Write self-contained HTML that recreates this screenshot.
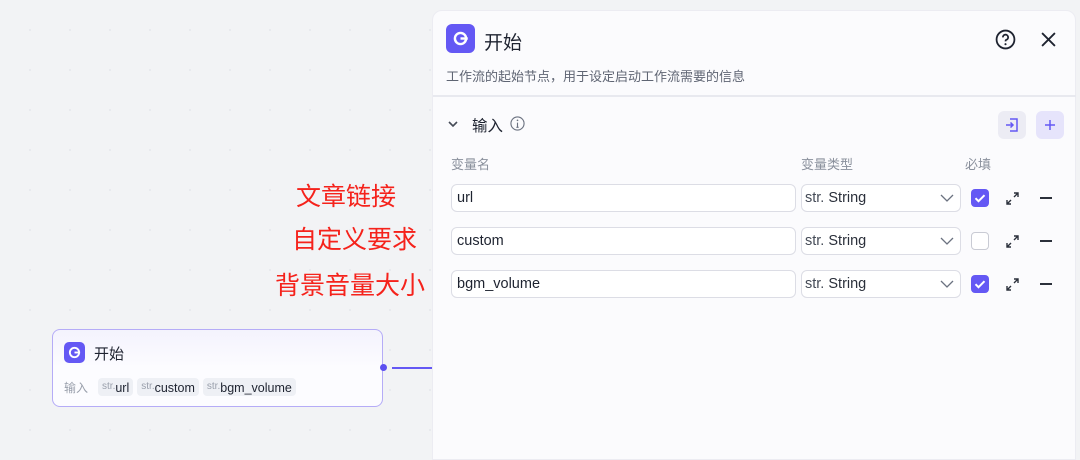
<!DOCTYPE html>
<html><head><meta charset="utf-8"><style>
*{box-sizing:border-box;margin:0;padding:0}
body{width:1080px;height:451px;overflow:hidden;position:relative;background:#f2f3f5;font-family:"Liberation Sans","Noto Sans CJK SC",sans-serif;background-image:radial-gradient(#e8e9ed 1px,transparent 1.2px);background-size:40px 40px;background-position:10px 10px}
.abs{position:absolute}
.red{position:absolute;color:#f5221b;font-size:25px;line-height:30px;white-space:nowrap}
.node{left:52px;top:329px;width:331px;height:78px;border:1.5px solid #b5acf7;border-radius:8px;background:linear-gradient(#f4f3fd,#fcfcff 50%)}
.ico{background:#6458f4;border-radius:5px;display:flex;align-items:center;justify-content:center}
.tag{display:inline-block;background:#eef0f5;border-radius:4px;height:18px;padding:0 4px;font-size:12.5px;line-height:18px;color:#1e2330;margin-right:4px}
.tag i{font-style:normal;color:#9aa0ac;font-size:10px;vertical-align:3px}
.panel{left:432px;top:10px;width:644px;height:450px;background:#fbfbfd;border-radius:10px 10px 0 0;border:1px solid #ececf2}
.in{position:absolute;left:451px;width:345px;height:28px;border:1px solid #dcdde5;border-radius:6px;background:#fff;font-size:14.5px;line-height:26px;padding-left:5px;color:#1e2330}
.sel{position:absolute;left:801px;width:160px;height:28px;border:1px solid #dcdde5;border-radius:6px;background:#fff;font-size:14.5px;line-height:26px;padding-left:3px;color:#2b303b}
.sel b{font-weight:normal;color:#454b57}
.sel svg{position:absolute;right:6px;top:9px}
.cb{position:absolute;left:971px;width:18px;height:18px;border-radius:4px}
.cb.on{background:#6458f4}
.cb.off{border:1px solid #c9cbd4;background:#fff}
.hd{position:absolute;color:#8a909c;font-size:13px;top:154px}
</style></head><body>
<div class="red" style="left:296px;top:182px">文章链接</div>
<div class="red" style="left:292px;top:225px">自定义要求</div>
<div class="red" style="left:275px;top:271px">背景音量大小</div>

<div class="abs node">
 <div class="abs ico" style="left:11px;top:12px;width:21px;height:21px"><svg width="13" height="13" viewBox="0 0 14 14"><circle cx="7" cy="7" r="5" fill="none" stroke="#fff" stroke-width="2"/><path d="M7 7h6" stroke="#fff" stroke-width="2"/></svg></div>
 <div class="abs" style="left:41px;top:13px;font-size:15px;color:#1e2330">开始</div>
 <div class="abs" style="left:11px;top:48px;font-size:12px;color:#9aa0ac;line-height:18px">输入&nbsp;&nbsp;&nbsp;<span class="tag"><i>str.</i>url</span><span class="tag"><i>str.</i>custom</span><span class="tag"><i>str.</i>bgm_volume</span></div>
</div>
<div class="abs" style="left:380px;top:364px;width:7px;height:7px;border-radius:50%;background:#5b4ff0"></div>
<div class="abs" style="left:392px;top:367px;width:40px;height:2px;background:#6458f4"></div>

<div class="abs panel"></div>
<div class="abs ico" style="left:446px;top:24px;width:29px;height:29px;border-radius:6px"><svg width="17" height="17" viewBox="0 0 14 14"><circle cx="7" cy="7" r="4.6" fill="none" stroke="#fff" stroke-width="2"/><path d="M7 7h6" stroke="#fff" stroke-width="2"/></svg></div>
<div class="abs" style="left:484px;top:28px;font-size:19px;color:#1e2330">开始</div>
<svg class="abs" style="left:995px;top:29px" width="21" height="21" viewBox="0 0 20 20"><circle cx="10" cy="10" r="8.5" fill="none" stroke="#1e2330" stroke-width="1.7"/><path d="M7.5 8a2.5 2.5 0 1 1 3.2 2.3c-.6.3-.7.7-.7 1.5" fill="none" stroke="#1e2330" stroke-width="1.7"/><circle cx="10" cy="14.5" r="1" fill="#1e2330"/></svg>
<svg class="abs" style="left:1041px;top:32px" width="15" height="15" viewBox="0 0 14 14"><path d="M1 1l12 12M13 1L1 13" stroke="#1e2330" stroke-width="1.7"/></svg>
<div class="abs" style="left:446px;top:66px;font-size:13px;color:#5f6573">工作流的起始节点，用于设定启动工作流需要的信息</div>
<div class="abs" style="left:433px;top:95px;width:643px;height:2px;background:#e8e9ef"></div>

<svg class="abs" style="left:448px;top:121px" width="10" height="7" viewBox="0 0 10 7"><path d="M1 1l4 4 4-4" fill="none" stroke="#454b57" stroke-width="1.6"/></svg>
<div class="abs" style="left:472px;top:114px;font-size:15.5px;color:#1e2330">输入</div>
<svg class="abs" style="left:510px;top:116px" width="15" height="15" viewBox="0 0 16 16"><circle cx="8" cy="8" r="7" fill="none" stroke="#6b7280" stroke-width="1.2"/><path d="M8 7v5M6.8 12h2.4" stroke="#6b7280" stroke-width="1.2"/><circle cx="8" cy="4.6" r=".9" fill="#6b7280"/></svg>
<div class="abs" style="left:998px;top:111px;width:28px;height:28px;border-radius:6px;background:#ececf4"><svg style="position:absolute;left:7px;top:7px" width="14" height="14" viewBox="0 0 14 14"><path d="M5 1h7v12H5M1 7h7M5.5 4.5L8 7l-2.5 2.5" fill="none" stroke="#6458f4" stroke-width="1.5"/></svg></div>
<div class="abs" style="left:1036px;top:111px;width:28px;height:28px;border-radius:6px;background:#e6e4fb"><svg style="position:absolute;left:8px;top:8px" width="12" height="12" viewBox="0 0 12 12"><path d="M6 1v10M1 6h10" stroke="#6458f4" stroke-width="1.5"/></svg></div>

<div class="hd" style="left:451px">变量名</div>
<div class="hd" style="left:801px">变量类型</div>
<div class="hd" style="left:965px">必填</div>

<div class="in" style="top:184px">url</div>
<div class="in" style="top:227px">custom</div>
<div class="in" style="top:270px">bgm_volume</div>
<div class="sel" style="top:184px"><b>str.</b> String<svg width="14" height="9" viewBox="0 0 14 9"><path d="M1 1l6 6 6-6" fill="none" stroke="#6b7280" stroke-width="1.3"/></svg></div>
<div class="sel" style="top:227px"><b>str.</b> String<svg width="14" height="9" viewBox="0 0 14 9"><path d="M1 1l6 6 6-6" fill="none" stroke="#6b7280" stroke-width="1.3"/></svg></div>
<div class="sel" style="top:270px"><b>str.</b> String<svg width="14" height="9" viewBox="0 0 14 9"><path d="M1 1l6 6 6-6" fill="none" stroke="#6b7280" stroke-width="1.3"/></svg></div>

<div class="cb on" style="top:189px"><svg width="18" height="18" viewBox="0 0 18 18"><path d="M4.5 9.2l3 3 6-6" fill="none" stroke="#fff" stroke-width="2"/></svg></div>
<div class="cb off" style="top:232px"></div>
<div class="cb on" style="top:275px"><svg width="18" height="18" viewBox="0 0 18 18"><path d="M4.5 9.2l3 3 6-6" fill="none" stroke="#fff" stroke-width="2"/></svg></div>

<svg class="abs" style="left:1006px;top:192px" width="13" height="13" viewBox="0 0 13 13"><path d="M8 1h4v4M12 1L8 5M5 12H1V8M1 12l4-4" fill="none" stroke="#2b303b" stroke-width="1.4"/></svg>
<svg class="abs" style="left:1006px;top:235px" width="13" height="13" viewBox="0 0 13 13"><path d="M8 1h4v4M12 1L8 5M5 12H1V8M1 12l4-4" fill="none" stroke="#2b303b" stroke-width="1.4"/></svg>
<svg class="abs" style="left:1006px;top:278px" width="13" height="13" viewBox="0 0 13 13"><path d="M8 1h4v4M12 1L8 5M5 12H1V8M1 12l4-4" fill="none" stroke="#2b303b" stroke-width="1.4"/></svg>
<div class="abs" style="left:1040px;top:197px;width:12px;height:1.6px;background:#2b303b"></div>
<div class="abs" style="left:1040px;top:240px;width:12px;height:1.6px;background:#2b303b"></div>
<div class="abs" style="left:1040px;top:283px;width:12px;height:1.6px;background:#2b303b"></div>
</body></html>
